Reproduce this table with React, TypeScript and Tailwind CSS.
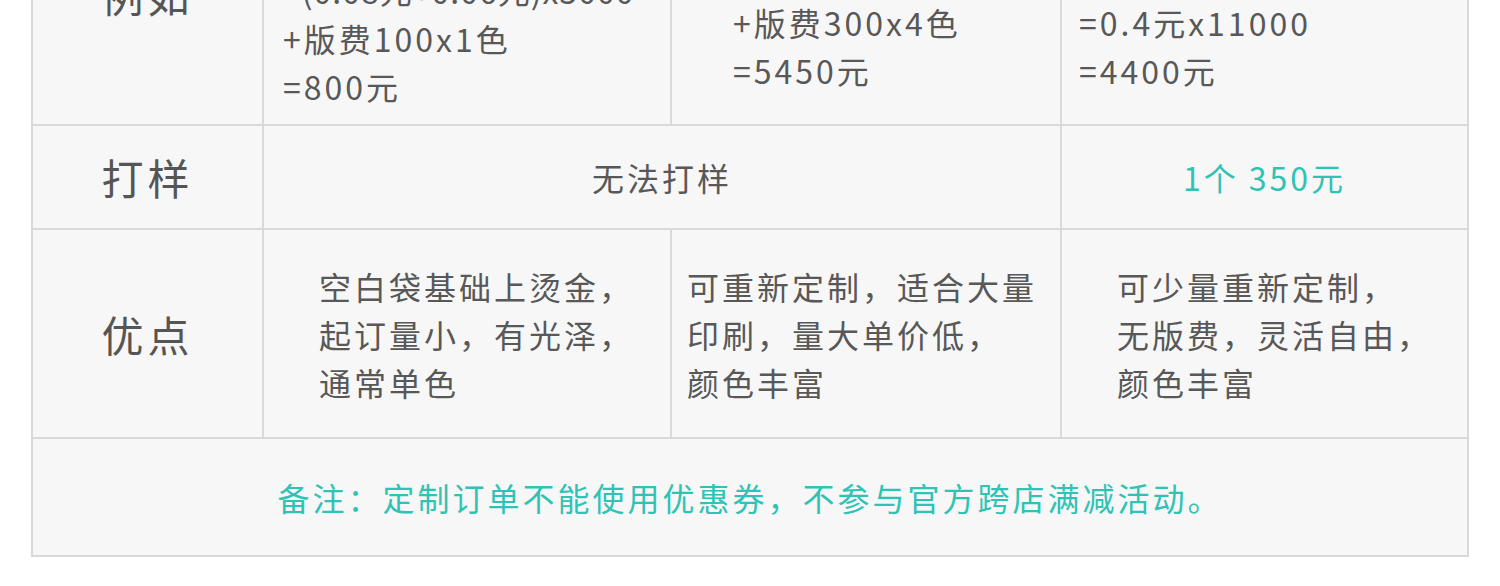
const cell = "bg-[#f7f7f7] flex";
const label = "text-[42px] tracking-[4px] text-[#555555] leading-[48px]";
const body = "text-[32px] tracking-[3px] text-[#585858] leading-[48px] whitespace-nowrap";

const App = () => {
  return (
    <div
      className="w-[1500px] h-[586px] overflow-hidden bg-white px-[31px]"
      style={{ fontFamily: '"Noto Sans CJK SC", "Noto Sans", sans-serif' }}
    >
      <div className="-mt-[100px] grid grid-cols-[229px_406px_388px_1fr] grid-rows-[222px_102px_207px_116px] gap-[2px] bg-[#d9d9d9] p-[2px]">
        {/* 例如 */}
        <div className={`${cell} items-end justify-center pb-[105px]`}>
          <span className={label}>例如</span>
        </div>
        <div className={`${cell} items-end pl-[19px] pb-[14px]`}>
          <p className={body}>
            例：5000个
            <br />
            <span className="tracking-[1px]">=(0.08元+0.06元)x5000</span>
            <br />
            +版费100x1色
            <br />
            =800元
          </p>
        </div>
        <div className={`${cell} items-end pl-[61px] pb-[30px]`}>
          <p className={body}>
            例：5000个
            <br />
            =0.45元x5000
            <br />
            +版费300x4色
            <br />
            =5450元
          </p>
        </div>
        <div className={`${cell} items-end pl-[17px] pb-[30px]`}>
          <p className={body}>
            例：11000个
            <br />
            =0.4元x11000
            <br />
            =4400元
          </p>
        </div>

        {/* 打样 */}
        <div className={`${cell} items-center justify-center`}>
          <span className={label}>打样</span>
        </div>
        <div className={`${cell} col-span-2 items-center justify-center`}>
          <span className={body}>无法打样</span>
        </div>
        <div className={`${cell} items-center justify-center`}>
          <span className={`${body} !text-[#2ec3b5]`}>1个 350元</span>
        </div>

        {/* 优点 */}
        <div className={`${cell} items-center justify-center`}>
          <span className={label}>优点</span>
        </div>
        <div className={`${cell} items-center pl-[55px]`}>
          <p className={body}>
            空白袋基础上烫金，
            <br />
            起订量小，有光泽，
            <br />
            通常单色
          </p>
        </div>
        <div className={`${cell} items-center pl-[15px]`}>
          <p className={body}>
            可重新定制，适合大量
            <br />
            印刷，量大单价低，
            <br />
            颜色丰富
          </p>
        </div>
        <div className={`${cell} items-center pl-[55px]`}>
          <p className={body}>
            可少量重新定制，
            <br />
            无版费，灵活自由，
            <br />
            颜色丰富
          </p>
        </div>

        {/* 备注 */}
        <div className={`${cell} col-span-4 items-center justify-center`}>
          <span className="text-[32px] tracking-[3px] leading-[48px] text-[#2ec3b5] whitespace-nowrap">
            备注：定制订单不能使用优惠券，不参与官方跨店满减活动。
          </span>
        </div>
      </div>
    </div>
  );
};

export default App;
